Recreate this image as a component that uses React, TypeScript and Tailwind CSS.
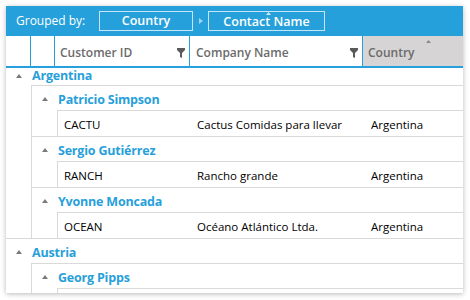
import React from "react";

const font = { fontFamily: '"Open Sans", "Noto Sans", sans-serif' };

function Tri({ className = "" }: { className?: string }) {
  return (
    <svg width="6" height="4" viewBox="0 0 6 4" className={className}>
      <path d="M0 4 L3 0 L6 4 Z" fill="currentColor" />
    </svg>
  );
}

function Funnel() {
  return (
    <svg width="8" height="10" viewBox="0 0 8 10" className="text-[#5a5a5a]">
      <path d="M0 0 H8 V2 L5 5 V10 L3 9 V5 L0 2 Z" fill="currentColor" />
    </svg>
  );
}

function GroupRow({ label, first }: { label: string; first?: boolean }) {
  return (
    <div
      className={`shrink-0 flex items-center box-border ${first ? "h-[17px] pb-[2px]" : "h-[25px] border-t border-[#d9d9d9] pt-[2px]"}`}
    >
      <div className="w-[26px] flex justify-center pl-[1px] pr-[2px] text-[#7a7a7a]">
        <Tri />
      </div>
      <span className="text-[12.5px] font-bold tracking-[-0.2px] text-[#27a0da] leading-[15px]">{label}</span>
    </div>
  );
}

function DataRow({ id, company, country }: { id: string; company: string; country: string }) {
  return (
    <div className="shrink-0 flex items-center h-[26px] box-border border-t border-[#d9d9d9] pt-[2px] text-[11.5px] text-black leading-none">
      <div className="w-[133px] pl-[6px]">{id}</div>
      <div className="w-[173px] pl-[6px]">{company}</div>
      <div className="flex-1 pl-[7px]">{country}</div>
    </div>
  );
}

export default function App() {
  return (
    <div className="w-[470px] h-[300px] bg-white pt-[6px] pl-[6px]" style={font}>
      <div className="w-[457px] h-[287px] flex flex-col overflow-hidden bg-white shadow-[0_1px_5px_rgba(0,0,0,0.28)]">
        {/* Group panel */}
        <div className="h-[30px] shrink-0 bg-[#26a0da] flex items-center text-white">
          <span className="ml-[10px] w-[83px] text-[12px] leading-none pb-[1px]">Grouped by:</span>
          <div className="w-[94px] h-[20px] border border-[#c6e5f6] flex items-center justify-center text-[12.5px] font-semibold leading-none">
            Country
          </div>
          <div className="w-[15px] flex justify-center">
            <svg width="4" height="6" viewBox="0 0 4 6">
              <path d="M0 0 L4 3 L0 6 Z" fill="#9fd3ef" />
            </svg>
          </div>
          <div className="relative w-[117px] h-[20px] border border-[#c6e5f6] flex items-center justify-center text-[12.5px] font-semibold leading-none pt-[2px]">
            Contact Name
            <div className="absolute left-[57px] top-[0px] text-[#d5ecf9] leading-none">
              <svg width="5" height="3" viewBox="0 0 5 3" className="block">
                <path d="M0 3 L2.5 0 L5 3 Z" fill="currentColor" />
              </svg>
            </div>
          </div>
        </div>

        {/* Column header */}
        <div className="h-[32px] shrink-0 flex border-b-2 border-[#26a0da] text-[12px] font-semibold text-[#6b6b6b] leading-none">
          <div className="w-[24px]" />
          <div className="w-[24px] border-l border-[#26a0da]" />
          <div className="w-[135px] border-l border-[#26a0da] flex items-center justify-between pl-[5px] pr-[4px] pt-[4px]">
            <span>Customer ID</span>
            <Funnel />
          </div>
          <div className="w-[173px] border-l border-[#26a0da] flex items-center justify-between pl-[6px] pr-[4px] pt-[4px]">
            <span>Company Name</span>
            <Funnel />
          </div>
          <div className="relative flex-1 border-l border-[#26a0da] bg-[#d6d4d4] flex items-center pl-[5px] pt-[4px]">
            <span>Country</span>
            <div className="absolute left-[63px] top-[4px] text-[#8a8a8a]">
              <svg width="5" height="3" viewBox="0 0 5 3" className="block">
                <path d="M0 3 L2.5 0 L5 3 Z" fill="currentColor" />
              </svg>
            </div>
          </div>
        </div>

        {/* Body */}
        <div className="flex-1 flex flex-col overflow-hidden">
          <GroupRow label="Argentina" first />
          <div className="shrink-0 ml-[25px] border-l border-[#d9d9d9] flex flex-col">
            <GroupRow label="Patricio Simpson" />
            <div className="shrink-0 ml-[25px] border-l border-[#d9d9d9] flex flex-col">
              <DataRow id="CACTU" company="Cactus Comidas para llevar" country="Argentina" />
            </div>
            <GroupRow label="Sergio Gutiérrez" />
            <div className="shrink-0 ml-[25px] border-l border-[#d9d9d9] flex flex-col">
              <DataRow id="RANCH" company="Rancho grande" country="Argentina" />
            </div>
            <GroupRow label="Yvonne Moncada" />
            <div className="shrink-0 ml-[25px] border-l border-[#d9d9d9] flex flex-col">
              <DataRow id="OCEAN" company="Océano Atlántico Ltda." country="Argentina" />
            </div>
          </div>
          <GroupRow label="Austria" />
          <div className="shrink-0 ml-[25px] border-l border-[#d9d9d9] flex flex-col">
            <GroupRow label="Georg Pipps" />
            <div className="shrink-0 ml-[25px] border-l border-[#d9d9d9] flex flex-col">
              <DataRow id="" company="" country="" />
            </div>
          </div>
        </div>
      </div>
    </div>
  );
}
